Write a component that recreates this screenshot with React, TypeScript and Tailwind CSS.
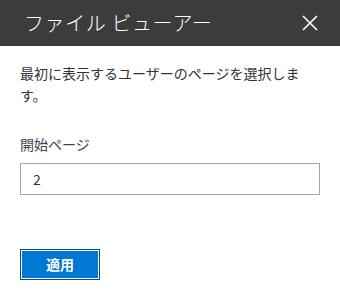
import React from 'react';

const font = { fontFamily: '"Noto Sans CJK JP", "Noto Sans", sans-serif' };

const CloseIcon: React.FC = () => (
  <svg width="16" height="16" viewBox="0 0 16 16" fill="none" stroke="white" strokeWidth="1.6">
    <path d="M1 1 L15 15 M15 1 L1 15" />
  </svg>
);

const App: React.FC = () => {
  return (
    <div className="w-[340px] h-[300px] bg-white" style={font}>
      <div className="h-[46px] bg-[#3c3c3c] flex items-center justify-between pl-6 pr-[22px]">
        <h1 className="text-white text-[20px] font-light tracking-[0.03em] leading-none">ファイル ビューアー</h1>
        <button className="flex items-center justify-center w-4 h-4">
          <CloseIcon />
        </button>
      </div>
      <div className="px-5 pt-4">
        <p className="text-[14px] leading-[22px] text-[#333] max-w-[285px]">
          最初に表示するユーザーのページを選択します。
        </p>
        <label className="block mt-[27px] text-[14px] leading-[22px] text-[#444]">開始ページ</label>
        <div className="mt-2 w-[300px] h-[32px] border border-[#a6a6a6] pl-3 flex items-center text-[14px] text-[#333]">
          2
        </div>
        <button className="mt-[54px] w-[80px] h-[31px] bg-[#0078d4] border border-[#004e8c] outline outline-1 outline-white -outline-offset-2 text-white text-[14px] font-bold">
          適用
        </button>
      </div>
    </div>
  );
};

export default App;
